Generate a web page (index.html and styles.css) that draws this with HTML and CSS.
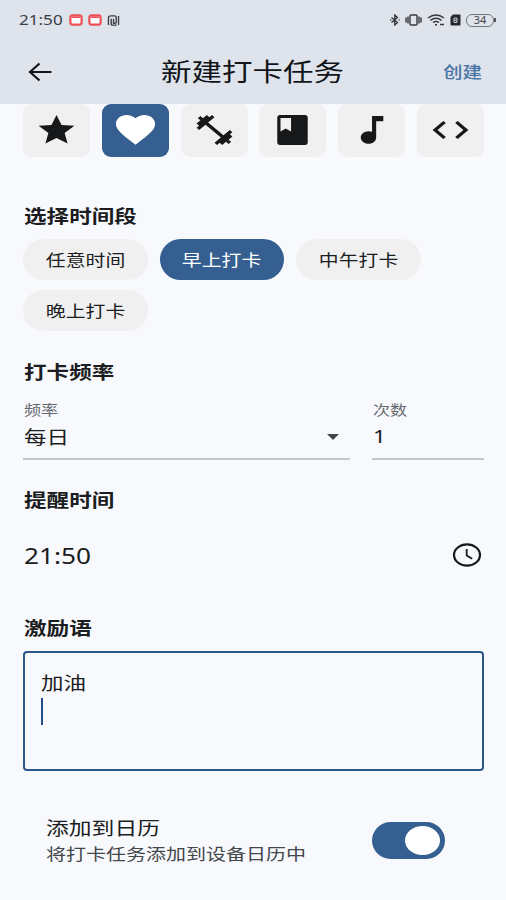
FILE: index.html
```html
<!DOCTYPE html>
<html lang="zh-CN">
<head>
  <meta charset="UTF-8">
  <title>新建打卡任务</title>
  <meta name="viewport" content="width=device-width, initial-scale=1.0">
  <link rel="stylesheet" href="styles.css">
</head>
<body>
<div class="app">

  <!-- Cabecera -->
  <header class="header">
    <div class="status-bar">
      <div class="status-left">
        <span class="status-time"><span class="wide">21:50</span></span>
        <svg class="rec" viewBox="0 0 14 12"><rect x="1.4" y="1.4" width="11.2" height="9.2" rx="2" fill="#fff" stroke="#ee4f57" stroke-width="2.2"/><path d="M3 3.200h8" stroke="#ee4f57" stroke-width="1.6"/></svg>
        <svg class="rec" viewBox="0 0 14 12"><rect x="1.4" y="1.4" width="11.2" height="9.2" rx="2" fill="#fff" stroke="#ee4f57" stroke-width="2.2"/><path d="M3 3.200h8" stroke="#ee4f57" stroke-width="1.6"/></svg>
        <svg class="nfc" viewBox="0 0 14 12" fill="none" stroke="#3a3e45" stroke-width="1.5"><path d="M1.500 11V3Q1.500 1 4 1h4.500Q10 1 10 3v5Q10 9 8.500 9H7V4M4.500 11V4M4.500 11h6M12.500 1v10"/></svg>
      </div>
      <div class="status-right">
        <svg width="10" height="12" viewBox="0 0 10 12" fill="none" stroke="#34383e" stroke-width="1.3"><path d="M1.500 3.500l6 5L4.800 11V1l2.700 2.500-6 5M.3 6h1M8.700 6h1"/></svg>
        <svg width="17" height="12" viewBox="0 0 17 12" fill="none" stroke="#34383e" stroke-width="1.400"><rect x="5" y="1" width="7" height="10" rx="1"/><path d="M1 3.500v5M3 2.500v7M14 2.500v7M16 3.500v5"/></svg>
        <svg width="18" height="12" viewBox="0 0 18 12" fill="none" stroke="#34383e" stroke-width="1.500"><path d="M1 4q8-6 16 0M3.500 6.300q5.500-4 11 0M6 8.500q3-2 6 0"/><path d="M8 10.800h2M13 10.500h4"/></svg>
        <svg width="11" height="12" viewBox="0 0 11 12"><path d="M3 .5h6.500q1 0 1 1v9q0 1-1 1h-8q-1 0-1-1V3z" fill="#24272c"/><path d="M4 4h3v4.500H4zM4 6.200h3" fill="none" stroke="#c9cdd4"/></svg>
        <span class="battery">34</span>
      </div>
    </div>
    <div class="toolbar">
      <svg class="back" viewBox="0 0 24 20" fill="none" stroke="#111418" stroke-width="2.200"><path d="M23.500 10H2M11.500 1.500L2 10l9.500 8.500"/></svg>
      <h1 class="title"><span class="wide">新建打卡任务</span></h1>
      <a class="create"><span class="wide">创建</span></a>
    </div>
  </header>

  <main class="content">

    <!-- Iconos -->
    <div class="icon-row">
      <div class="icon-tile"><svg viewBox="0 0 24 24" preserveAspectRatio="none"><path d="M12 17.270L18.180 21l-1.640-7.030L22 9.240l-7.190-.61L12 2 9.190 8.630 2 9.240l5.460 4.730L5.820 21z"/></svg></div>
      <div class="icon-tile active"><svg class="heart" viewBox="0 0 24 24" preserveAspectRatio="none"><path d="M12 21.350l-1.450-1.320C5.400 15.360 2 12.280 2 8.500 2 5.420 4.420 3 7.500 3c1.740 0 3.410.81 4.500 2.090C13.090 3.810 14.760 3 16.500 3 19.580 3 22 5.420 22 8.500c0 3.780-3.400 6.860-8.550 11.540z"/></svg></div>
      <div class="icon-tile"><svg viewBox="0 0 24 24" preserveAspectRatio="none"><path d="M20.570 14.860L22 13.430 20.570 12 17 15.570 8.430 7 12 3.430 10.570 2 9.140 3.430 7.710 2 5.570 4.140 4.140 2.710 2.710 4.140l1.430 1.430L2 7.710l1.430 1.430L2 10.570 3.430 12 7 8.430 15.570 17 12 20.570 13.430 22l1.430-1.430L16.290 22l2.140-2.140 1.430 1.430 1.430-1.430-1.430-1.430L22 16.290z"/></svg></div>
      <div class="icon-tile"><svg viewBox="0 0 24 24" preserveAspectRatio="none"><path d="M19 2H5c-.8 0-1.500.7-1.500 1.500v17c0 .8.7 1.500 1.500 1.500h14c.8 0 1.500-.7 1.500-1.500v-17c0-.8-.7-1.500-1.500-1.500zM5.300 4h5.900v9l-2.950-2L5.300 13z"/></svg></div>
      <div class="icon-tile"><svg viewBox="0 0 24 24" preserveAspectRatio="none"><path d="M12.300 2.700v10.500c-.6-.2-1.200-.4-1.900-.4-2.400 0-4.400 1.900-4.400 4.200s2 4.200 4.400 4.200 4.200-1.900 4.200-4.200V6.200h4V2.700z"/></svg></div>
      <div class="icon-tile"><svg viewBox="0 0 24 24" preserveAspectRatio="none"><path d="M9.400 16.600L4.800 12l4.600-4.600L8 6l-6 6 6 6zM14.600 16.600l4.600-4.600-4.600-4.600L16 6l6 6-6 6z"/></svg></div>
    </div>

    <!-- Franja horaria -->
    <h2 class="heading heading-period"><span class="wide">选择时间段</span></h2>
    <div class="chips">
      <span class="chip"><span class="wide">任意时间</span></span>
      <span class="chip active"><span class="wide">早上打卡</span></span>
      <span class="chip"><span class="wide">中午打卡</span></span>
      <span class="chip"><span class="wide">晚上打卡</span></span>
    </div>

    <!-- Frecuencia -->
    <h2 class="heading heading-frequency"><span class="wide">打卡频率</span></h2>
    <div class="fields">
      <div class="field field-select">
        <span class="label"><span class="wide">频率</span></span>
        <div class="value"><span class="wide">每日</span><span class="caret"></span></div>
      </div>
      <div class="field field-count">
        <span class="label"><span class="wide">次数</span></span>
        <div class="value"><span class="wide">1</span></div>
      </div>
    </div>

    <!-- Recordatorio -->
    <h2 class="heading heading-reminder"><span class="wide">提醒时间</span></h2>
    <div class="time-row">
      <span class="wide">21:50</span>
      <svg class="clock" viewBox="0 0 30 24" fill="none" stroke="#16191d"><ellipse cx="15" cy="12" rx="13" ry="10.600" stroke-width="2.200"/><path d="M14.700 6v6.500l5.500 3.300" stroke-width="1.800"/></svg>
    </div>

    <!-- Mensaje -->
    <h2 class="heading heading-message"><span class="wide">激励语</span></h2>
    <div class="message-box">
      <span class="message"><span class="wide">加油</span></span>
      <span class="cursor"></span>
    </div>

    <!-- Calendario -->
    <div class="calendar-row">
      <div class="calendar-text">
        <span class="calendar-title"><span class="wide">添加到日历</span></span>
        <span class="calendar-desc"><span class="wide">将打卡任务添加到设备日历中</span></span>
      </div>
      <span class="switch"><span class="knob"></span></span>
    </div>

  </main>
</div>
</body>
</html>
```

FILE: styles.css
```css
* {
  box-sizing: border-box;
}

body {
  margin: 0;
  background: #f8f9fd;
  color: #1b1d21;
  font-family: "Noto Sans", "Noto Sans CJK SC", sans-serif;
}

h1,
h2 {
  margin: 0;
}

.app {
  height: 900px;
  overflow: hidden;
}

/* Texto ensanchado */
.wide {
  display: inline-block;
  white-space: nowrap;
  transform: scaleX(1.22);
  transform-origin: left center;
}

.header {
  height: 104px;
  background: #dfe3eb;
}

.status-bar {
  display: flex;
  justify-content: space-between;
  align-items: center;
  height: 40px;
  padding: 0 12px 0 19px;
}

.status-left,
.status-right {
  display: flex;
  align-items: center;
}

.status-left {
  gap: 5px;
}

.status-time {
  width: 45px;
  font-size: 14px;
  line-height: 20px;
  color: #3a3e45;
}

.rec {
  width: 14px;
  height: 12px;
}

.nfc {
  width: 13px;
  height: 11px;
}

.status-right {
  gap: 5px;
}

.battery {
  position: relative;
  width: 28px;
  height: 13px;
  border: 1.5px solid #73777e;
  border-radius: 6px;
  color: #44484e;
  font-size: 11px;
  line-height: 10px;
  text-align: center;
}

.battery::after {
  content: "";
  position: absolute;
  right: -3px;
  top: 3px;
  width: 2px;
  height: 4px;
  background: #55595f;
}

.toolbar {
  display: flex;
  align-items: center;
  height: 64px;
  padding: 0 24px 0 28px;
}

.back {
  width: 24px;
  height: 20px;
}

.title {
  width: 184px;
  margin-left: 109px;
  padding-bottom: 3px;
  font-size: 25px;
  font-weight: 400;
  line-height: 36px;
  color: #111418;
}

.create {
  width: 39px;
  margin-left: auto;
  font-size: 16px;
  font-weight: 500;
  line-height: 24px;
  color: #4874a5;
}

.content {
  padding: 0 22px 0 23px;
}

.icon-row {
  display: flex;
  justify-content: space-between;
}

.icon-tile {
  display: flex;
  justify-content: center;
  align-items: center;
  width: 67px;
  height: 53px;
  padding-bottom: 2px;
  border-radius: 9px;
  background: #f0f0f0;
}

.icon-tile svg {
  width: 43px;
  height: 36px;
  fill: #16181a;
}

.icon-tile.active {
  background: #355f90;
}

.icon-tile .heart {
  width: 47px;
  height: 39px;
  fill: #fff;
}

.heading {
  padding-left: 1px;
  font-size: 18.500px;
  font-weight: 700;
  line-height: 24px;
}

.heading-period {
  margin-top: 47px;
}

.chips {
  display: flex;
  flex-wrap: wrap;
  gap: 10px 12px;
  margin-top: 11px;
}

.chip {
  width: 124.500px;
  height: 41px;
  border-radius: 21px;
  background: #f0f0f0;
  font-size: 16.300px;
  line-height: 42px;
  text-align: center;
}

.chip .wide {
  transform-origin: center;
}

.chip.active {
  background: #355f90;
  color: #fff;
}

.heading-frequency {
  margin-top: 29px;
}

.fields {
  display: flex;
  gap: 22px;
  margin-top: 18px;
}

.field {
  height: 58px;
  border-bottom: 2px solid #c5c6ca;
}

.field-select {
  width: 327px;
}

.field-count {
  flex: 1;
}

.label {
  display: block;
  padding-left: 1px;
  font-size: 14px;
  line-height: 16px;
  color: #66696e;
}

.value {
  display: flex;
  justify-content: space-between;
  align-items: center;
  height: 35px;
  padding: 0 11px 0 1px;
  font-size: 18.500px;
}

.caret {
  margin-top: 2px;
  border: 6px solid transparent;
  border-top: 6px solid #43464b;
  border-bottom: 0;
}

.heading-reminder {
  margin-top: 28px;
}

.time-row {
  display: flex;
  justify-content: space-between;
  align-items: center;
  height: 40px;
  margin-top: 23px;
  padding: 0 2px 0 1px;
  font-size: 21.500px;
}

.clock {
  width: 30px;
  height: 24px;
}

.heading-message {
  margin-top: 41px;
}

.message-box {
  height: 120px;
  margin-top: 11px;
  padding: 15px 16px;
  border: 2px solid #2c5688;
  border-radius: 4px;
}

.message {
  display: block;
  font-size: 18.500px;
  line-height: 29px;
}

.cursor {
  display: block;
  width: 2px;
  height: 27px;
  margin-top: 1px;
  background: #244b8a;
}

.calendar-row {
  display: flex;
  justify-content: space-between;
  margin-top: 43px;
  padding: 0 39px 0 23px;
}

.calendar-title {
  display: block;
  font-size: 18.700px;
  line-height: 28px;
}

.calendar-desc {
  display: block;
  font-size: 16.400px;
  line-height: 24px;
  color: #44474c;
}

.switch {
  display: flex;
  justify-content: flex-end;
  align-items: center;
  width: 73px;
  height: 37px;
  margin-top: 8px;
  padding-right: 5px;
  border-radius: 19px;
  background: #355f90;
}

.knob {
  width: 35px;
  height: 29px;
  border-radius: 50%;
  background: #fff;
}
```
